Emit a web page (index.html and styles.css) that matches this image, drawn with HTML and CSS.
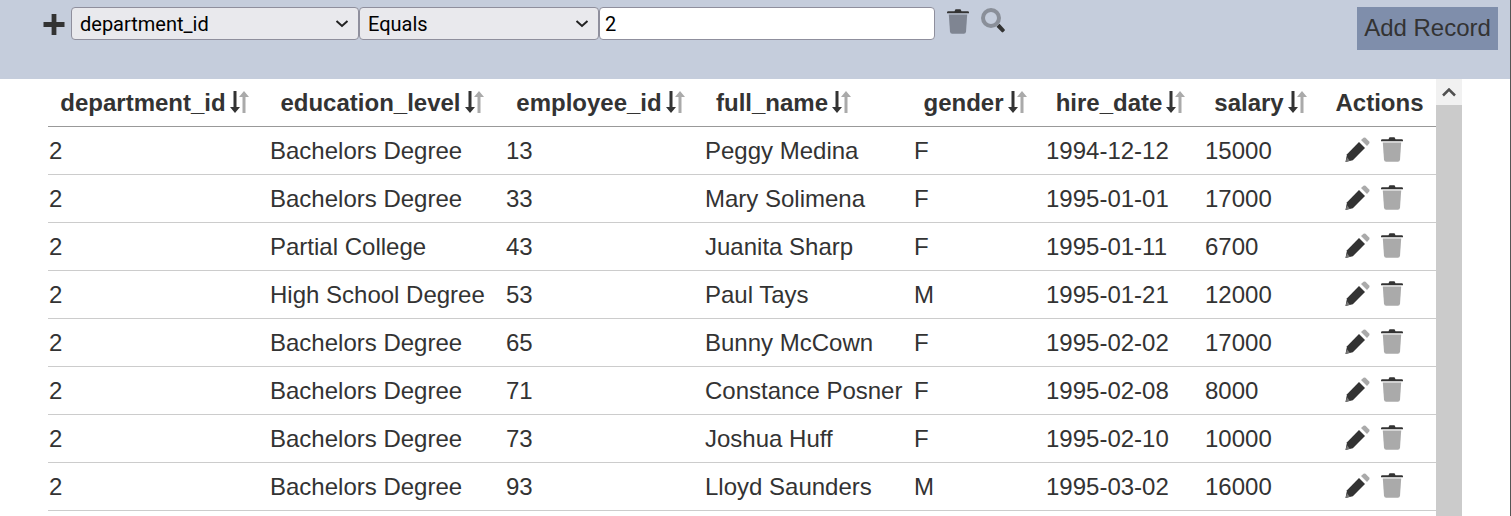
FILE: index.html
```html
<!DOCTYPE html>
<html lang="en">
<head>
    <meta charset="UTF-8">
    <meta name="viewport" content="width=device-width, initial-scale=1.0">
    <title>Employees</title>
    <link rel="stylesheet" href="styles.css">
</head>
<body>
    <svg class="icon-defs" width="0" height="0">
        <symbol id="i-plus" viewBox="0 0 22 22">
            <path d="M8.500 0h5v8.500h8.500v5h-8.500v8.500h-5v-8.500h-8.500v-5h8.500z"/>
        </symbol>
        <symbol id="i-trash" viewBox="0 0 22 25">
            <path class="trash-lid" d="M7.500 2.200 8.500 0.300h5l1 1.900h6.300q1.200 0 1.200 1.300v0.700h-22v-0.700q0-1.300 1.200-1.300z"/>
            <path class="trash-can" d="M1.800 5.500h18.400l-1.200 17.300q-0.200 2-2.200 2h-11.600q-2 0-2.200-2z"/>
        </symbol>
        <symbol id="i-pencil" viewBox="0 0 25 25">
            <path class="pencil-rubber" d="M16 3 18.500 0.800q1-0.800 2 0l3.700 3.700q0.800 1 0 2L22 9z"/>
            <path class="pencil-body" d="M14 5 20 11 7.800 23.300 0.500 25 2 17.200z"/>
            <path class="pencil-point" d="M2 20.200 4.900 23.800 0.500 25z"/>
        </symbol>
        <symbol id="i-search" viewBox="0 0 24 25">
            <circle class="search-lens" cx="10" cy="10" r="8" fill="none" stroke-width="4"/>
            <path class="search-handle" d="M15.500 18.800 18.500 15.800 23.500 21.200q0.800 0.800 0 1.600l-1.200 1.200q-0.800 0.800-1.600 0z"/>
        </symbol>
        <symbol id="i-sort" viewBox="0 0 19 22">
            <path class="sort-down" d="M3.500 0h3v16h3.500l-5 6-5-6h3.500z"/>
            <path class="sort-up" d="M12.500 22h3v-16h3.500l-5-6-5 6h3.500z"/>
        </symbol>
    </svg>

    <div class="filter-bar">
        <svg class="plus-icon"><use href="#i-plus"/></svg>
        <select class="filter-select field-select">
            <option>department_id</option>
        </select>
        <select class="filter-select op-select">
            <option>Equals</option>
        </select>
        <input class="filter-input" type="text" value="2">
        <svg class="trash-icon bar-trash"><use href="#i-trash"/></svg>
        <svg class="search-icon"><use href="#i-search"/></svg>
        <button class="add-button">Add Record</button>
    </div>

    <div class="table-wrap">
        <table class="data-table">
            <thead>
                <tr>
                    <th>department_id<svg class="sort-icon"><use href="#i-sort"/></svg></th>
                    <th>education_level<svg class="sort-icon"><use href="#i-sort"/></svg></th>
                    <th>employee_id<svg class="sort-icon"><use href="#i-sort"/></svg></th>
                    <th>full_name<svg class="sort-icon"><use href="#i-sort"/></svg></th>
                    <th>gender<svg class="sort-icon"><use href="#i-sort"/></svg></th>
                    <th>hire_date<svg class="sort-icon"><use href="#i-sort"/></svg></th>
                    <th>salary<svg class="sort-icon"><use href="#i-sort"/></svg></th>
                    <th>Actions</th>
                </tr>
            </thead>
            <tbody>
                <tr>
                    <td>2</td><td>Bachelors Degree</td><td>13</td><td>Peggy Medina</td><td>F</td><td>1994-12-12</td><td>15000</td>
                    <td class="actions"><svg class="pencil-icon"><use href="#i-pencil"/></svg><svg class="trash-icon"><use href="#i-trash"/></svg></td>
                </tr>
                <tr>
                    <td>2</td><td>Bachelors Degree</td><td>33</td><td>Mary Solimena</td><td>F</td><td>1995-01-01</td><td>17000</td>
                    <td class="actions"><svg class="pencil-icon"><use href="#i-pencil"/></svg><svg class="trash-icon"><use href="#i-trash"/></svg></td>
                </tr>
                <tr>
                    <td>2</td><td>Partial College</td><td>43</td><td>Juanita Sharp</td><td>F</td><td>1995-01-11</td><td>6700</td>
                    <td class="actions"><svg class="pencil-icon"><use href="#i-pencil"/></svg><svg class="trash-icon"><use href="#i-trash"/></svg></td>
                </tr>
                <tr>
                    <td>2</td><td>High School Degree</td><td>53</td><td>Paul Tays</td><td>M</td><td>1995-01-21</td><td>12000</td>
                    <td class="actions"><svg class="pencil-icon"><use href="#i-pencil"/></svg><svg class="trash-icon"><use href="#i-trash"/></svg></td>
                </tr>
                <tr>
                    <td>2</td><td>Bachelors Degree</td><td>65</td><td>Bunny McCown</td><td>F</td><td>1995-02-02</td><td>17000</td>
                    <td class="actions"><svg class="pencil-icon"><use href="#i-pencil"/></svg><svg class="trash-icon"><use href="#i-trash"/></svg></td>
                </tr>
                <tr>
                    <td>2</td><td>Bachelors Degree</td><td>71</td><td>Constance Posner</td><td>F</td><td>1995-02-08</td><td>8000</td>
                    <td class="actions"><svg class="pencil-icon"><use href="#i-pencil"/></svg><svg class="trash-icon"><use href="#i-trash"/></svg></td>
                </tr>
                <tr>
                    <td>2</td><td>Bachelors Degree</td><td>73</td><td>Joshua Huff</td><td>F</td><td>1995-02-10</td><td>10000</td>
                    <td class="actions"><svg class="pencil-icon"><use href="#i-pencil"/></svg><svg class="trash-icon"><use href="#i-trash"/></svg></td>
                </tr>
                <tr>
                    <td>2</td><td>Bachelors Degree</td><td>93</td><td>Lloyd Saunders</td><td>M</td><td>1995-03-02</td><td>16000</td>
                    <td class="actions"><svg class="pencil-icon"><use href="#i-pencil"/></svg><svg class="trash-icon"><use href="#i-trash"/></svg></td>
                </tr>
            </tbody>
        </table>
        <div class="scroll-track">
            <div class="scroll-button">
                <svg class="scroll-arrow" viewBox="0 0 14 9"><path d="M1 7.500 7 1.500l6 6"/></svg>
            </div>
        </div>
    </div>
</body>
</html>
```

FILE: styles.css
```css
html, body {
    height: 516px;
    overflow: hidden;
}

body {
    margin: 0;
    padding: 0;
    border-right: 1px solid #555;
    font-family: "Liberation Sans", Arial, sans-serif;
    font-size: 24px;
    color: #333;
    background: white;
}

.icon-defs {
    display: block;
    height: 0;
}

/* icons are drawn through <use>, so their colours come in as variables */
.trash-lid { fill: var(--lid, #333); }
.trash-can { fill: var(--can, #aaa); }
.pencil-rubber { fill: #aaa; }
.pencil-body { fill: #333; }
.pencil-point { fill: #777; }
.search-lens { stroke: #8a8f99; }
.search-handle { fill: #333; }
.sort-down { fill: #333; }
.sort-up { fill: #aaa; }

.filter-bar {
    display: flex;
    align-items: flex-start;
    height: 79px;
    box-sizing: border-box;
    padding: 7px 12px 0 43px;
    background: #c5cddc;
}

.plus-icon {
    width: 22px;
    height: 21px;
    margin: 7px 6px 0 0;
    fill: #333;
}

.filter-select,
.filter-input {
    height: 33px;
    box-sizing: border-box;
    border: 1px solid #8f8f9d;
    border-radius: 4px;
    font-family: Roboto, "Noto Sans", sans-serif;
    font-size: 20px;
    color: black;
    outline: none;
}

.filter-select {
    appearance: none;
    padding: 0 8px;
    background: #e9e9ed url("data:image/svg+xml,%3Csvg xmlns='http://www.w3.org/2000/svg' width='14' height='9'%3E%3Cpath d='M1.500 2l5.500 5 5.500-5' fill='none' stroke='%23222' stroke-width='2'/%3E%3C/svg%3E") no-repeat right 9px center;
}

.field-select {
    width: 288px;
}

.op-select {
    width: 240px;
}

.filter-input {
    width: 336px;
    padding: 0 5px;
    background: white;
}

.trash-icon {
    width: 22px;
    height: 25px;
}

.bar-trash {
    --can: #7f8592;
    margin: 2px 0 0 12px;
}

.search-icon {
    width: 24px;
    height: 25px;
    margin: 1px 0 0 12px;
}

.add-button {
    margin-left: auto;
    width: 141px;
    height: 43px;
    padding: 0 0 2px;
    border: none;
    background: #7f8eab;
    font-family: inherit;
    font-size: 24px;
    color: #333;
}

.table-wrap {
    display: flex;
    align-items: flex-start;
    padding-left: 48px;
}

.data-table {
    width: 1388px;
    table-layout: fixed;
    border-collapse: collapse;
}

.data-table th,
.data-table td {
    height: 47px;
    padding: 0 1px;
    border-bottom: 1px solid #ccc;
    white-space: nowrap;
}

.data-table th {
    border-bottom-color: #999;
    text-align: center;
    font-weight: bold;
    color: #333;
}

.data-table td {
    text-align: left;
}

.data-table th:nth-child(1) { width: 219px; }
.data-table th:nth-child(2) { width: 232px; padding-right: 3px; }
.data-table th:nth-child(3) { width: 197px; }
.data-table th:nth-child(4) { width: 165px; padding-right: 43px; }
.data-table th:nth-child(5) { width: 130px; }
.data-table th:nth-child(6) { width: 157px; }
.data-table th:nth-child(7) { width: 119px; }
.data-table th:nth-child(8) { padding-right: 3px; }

.sort-icon {
    width: 19px;
    height: 22px;
    margin: 0 8px 0 4px;
    vertical-align: -2px;
}

.data-table td.actions {
    padding-left: 20px;
    padding-bottom: 2px;
    height: 45px;
    line-height: 0;
}

.pencil-icon {
    width: 25px;
    height: 25px;
    margin-right: 11px;
}

.scroll-track {
    width: 26px;
    height: 437px;
    background: #cbcbcb;
}

.scroll-button {
    display: flex;
    align-items: center;
    justify-content: center;
    height: 26px;
    background: #f1f1f1;
}

.scroll-arrow {
    width: 14px;
    height: 9px;
    fill: none;
    stroke: #505050;
    stroke-width: 2.500;
}
```
